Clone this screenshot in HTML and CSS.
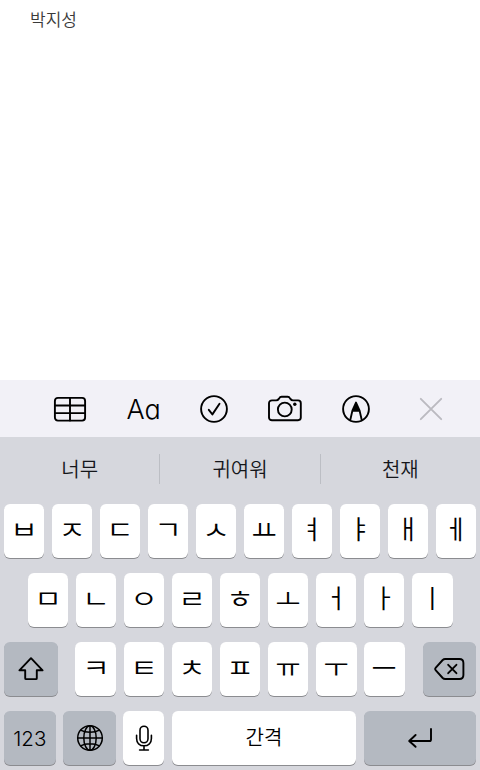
FILE: index.html
```html
<!DOCTYPE html>
<html lang="ko">
<head>
  <meta charset="UTF-8">
  <meta name="viewport" content="width=device-width, initial-scale=1.0">
  <title>메모</title>
  <link rel="stylesheet" href="styles.css">
</head>
<body>
  <div class="note">박지성</div>

  <div class="toolbar">
    <div class="tool table">
      <svg width="34" height="28" viewBox="0 0 34 28">
        <rect x="1.9" y="2.9" width="30.2" height="22.7" rx="3"/>
        <path d="M2 10.5H32M2 18.1H32M17 3V25.6"/>
      </svg>
    </div>
    <div class="tool format">Aa</div>
    <div class="tool check">
      <svg width="30" height="30" viewBox="0 0 30 30">
        <circle cx="15" cy="15" r="12.9"/>
        <path d="M9.8 15.8L13.4 20.4L20.5 9.8"/>
      </svg>
    </div>
    <div class="tool camera">
      <svg width="36" height="30" viewBox="0 0 36 30">
        <path d="M5 6.4H9.2C10.8 6.4 11.2 5.8 12 4.6C12.8 3.2 13.4 2.8 14.6 2.8H20.6C21.8 2.8 22.4 3.2 23.2 4.6C24 5.8 24.4 6.4 26 6.4H31C32.8 6.4 33.8 7.4 33.8 9.2V23.6C33.8 25.4 32.8 26.2 31 26.2H5C3.2 26.2 2 25.4 2 23.6V9.2C2 7.4 3.2 6.4 5 6.4Z"/>
        <circle cx="17.8" cy="15.5" r="6.9"/>
        <circle class="dot" cx="27.8" cy="10.3" r="1.7"/>
      </svg>
    </div>
    <div class="tool markup">
      <svg width="30" height="30" viewBox="0 0 30 30">
        <circle cx="15" cy="15" r="12.9"/>
        <path d="M9.2 26.2L11.4 16.6L15 8.6L18.6 16.6L20.8 26.2M11.4 16.8H18.6"/>
        <path class="dot" d="M15 8.2L18.7 16.8H11.3Z"/>
      </svg>
    </div>
    <div class="tool close">
      <svg width="24" height="24" viewBox="0 0 24 24">
        <path d="M1.8 1.8L22.2 22.2M22.2 1.8L1.8 22.2"/>
      </svg>
    </div>
  </div>

  <div class="keyboard">
    <div class="suggestions">
      <div class="word">너무</div>
      <div class="word">귀여워</div>
      <div class="word">천재</div>
    </div>

    <div class="row first">
      <div class="key"><span class="cons">ㅂ</span></div>
      <div class="key"><span class="cons">ㅈ</span></div>
      <div class="key"><span class="cons">ㄷ</span></div>
      <div class="key"><span class="cons">ㄱ</span></div>
      <div class="key"><span class="cons">ㅅ</span></div>
      <div class="key"><span class="flat">ㅛ</span></div>
      <div class="key"><span class="tall">ㅕ</span></div>
      <div class="key"><span class="tall">ㅑ</span></div>
      <div class="key"><span class="tall">ㅐ</span></div>
      <div class="key"><span class="tall">ㅔ</span></div>
    </div>

    <div class="row second">
      <div class="key"><span class="cons">ㅁ</span></div>
      <div class="key"><span class="cons">ㄴ</span></div>
      <div class="key"><span class="cons">ㅇ</span></div>
      <div class="key"><span class="cons">ㄹ</span></div>
      <div class="key"><span class="cons">ㅎ</span></div>
      <div class="key"><span class="flat">ㅗ</span></div>
      <div class="key"><span class="tall">ㅓ</span></div>
      <div class="key"><span class="tall">ㅏ</span></div>
      <div class="key"><span class="tall">ㅣ</span></div>
    </div>

    <div class="row third">
      <div class="key gray shift">
        <svg width="28" height="26" viewBox="0 0 28 26">
          <path d="M14 2.2L25.6 14.3H19.8V22.2C19.8 22.8 19.5 23.1 18.9 23.1H9.1C8.5 23.1 8.2 22.8 8.2 22.2V14.3H2.4Z"/>
        </svg>
      </div>
      <div class="key"><span class="cons">ㅋ</span></div>
      <div class="key"><span class="cons">ㅌ</span></div>
      <div class="key"><span class="cons">ㅊ</span></div>
      <div class="key"><span class="cons">ㅍ</span></div>
      <div class="key"><span class="flat under">ㅠ</span></div>
      <div class="key"><span class="flat under">ㅜ</span></div>
      <div class="key"><span class="flat">ㅡ</span></div>
      <div class="key gray delete">
        <svg width="32" height="24" viewBox="0 0 32 24">
          <path d="M12.2 2H26.4C29 2 30.4 3.4 30.4 6V18C30.4 20.6 29 22 26.4 22H12.2C11.2 22 10.4 21.7 9.7 21L2.6 13.2C1.8 12.3 1.8 11.7 2.6 10.8L9.7 3C10.4 2.3 11.2 2 12.2 2Z"/>
          <path d="M15.2 7.8L23.4 16.2M23.4 7.8L15.2 16.2"/>
        </svg>
      </div>
    </div>

    <div class="row fourth">
      <div class="key gray numbers">123</div>
      <div class="key gray globe">
        <svg width="28" height="28" viewBox="0 0 28 28">
          <circle cx="14" cy="14" r="12.3"/>
          <ellipse cx="14" cy="14" rx="6.2" ry="12.3"/>
          <path d="M14 1.7V26.3M1.7 14H26.3M4.6 6.2C9.5 9 18.5 9 23.4 6.2M4.6 21.8C9.5 19 18.5 19 23.4 21.8"/>
        </svg>
      </div>
      <div class="key mic">
        <svg width="20" height="28" viewBox="0 0 20 28">
          <rect x="6" y="2.2" width="8" height="16.6" rx="4"/>
          <path d="M2.6 11.2V14.4C2.6 19 5.6 21.8 10 21.8S17.4 19 17.4 14.4V11.2M10 21.8V26M5.6 26H14.4"/>
        </svg>
      </div>
      <div class="key space">간격</div>
      <div class="key gray enter">
        <svg width="26" height="22" viewBox="0 0 26 22">
          <path d="M24 2V12.4C24 13.5 23.5 14 22.4 14H2.4M8.6 8L2.2 14L8.6 19.8"/>
        </svg>
      </div>
    </div>
  </div>
</body>
</html>
```

FILE: styles.css
```css
*, *::before, *::after {
  box-sizing: border-box;
}

body {
  margin: 0;
  height: 770px;
  display: flex;
  flex-direction: column;
  overflow: hidden;
  background-color: #fff;
  color: #000;
  font-family: "Noto Sans CJK KR", sans-serif;
  font-weight: 350;
}

svg {
  display: block;
  fill: none;
  stroke: #000;
  stroke-width: 1.9;
  stroke-linecap: round;
  stroke-linejoin: round;
}

.dot {
  fill: #000;
  stroke: none;
}

.note {
  height: 380px;
  padding: 7px 0 0 30px;
  color: #3a3a3a;
  font-size: 17px;
  line-height: 24px;
}

.toolbar {
  height: 57px;
  padding: 0 12px 0 34px;
  display: flex;
  align-items: center;
  background-color: #f2f1f7;
}

.tool {
  width: 71.7px;
  display: flex;
  justify-content: center;
}

.format {
  padding: 2px 0 0 4px;
  font-family: Inter, sans-serif;
  font-size: 27px;
  font-weight: 300;
  font-feature-settings: "cv11";
  line-height: 30px;
}

.check {
  padding-left: 1px;
}

.markup {
  padding-right: 2px;
}

.close {
  margin-left: 3px;
}

.close svg {
  stroke: #bbbac0;
}

.keyboard {
  height: 333px;
  padding: 0 4px;
  background-color: #d6d7dd;
}

.suggestions {
  height: 67px;
  margin: 0 -4px;
  padding-bottom: 3px;
  display: flex;
  align-items: center;
}

.word {
  flex: 1;
  height: 30px;
  padding-bottom: 1px;
  display: flex;
  justify-content: center;
  align-items: center;
  color: #15161a;
  font-size: 20px;
}

.word + .word {
  border-left: 1px solid #bcbec4;
}

.row {
  height: 54px;
  margin-bottom: 15.1px;
  display: flex;
  gap: 7.7px;
}

.key {
  flex: 1;
  display: flex;
  justify-content: center;
  align-items: center;
  border-radius: 6px;
  background-color: #fff;
  box-shadow: 0 1px 0 #8b8c90;
  font-size: 26px;
}

.cons {
  transform: translateY(-3px) scale(1.15, 0.95);
}

.flat {
  transform: translateY(-3px) scaleX(1.05);
}

.under {
  transform: translateY(-4px) scaleX(1.05);
}

.tall {
  transform: translateY(-4px);
}

.gray {
  background-color: #b4b9c1;
}

.second {
  padding: 0 23.5px;
}

.shift,
.delete {
  flex: none;
  width: 53.5px;
}

.shift {
  margin-right: 10.2px;
}

.delete {
  margin-left: 10.2px;
}

.numbers {
  flex: none;
  width: 51.7px;
  font-family: Inter, sans-serif;
  font-size: 20.5px;
  font-weight: 300;
}

.globe {
  flex: none;
  width: 52.4px;
}

.globe svg {
  stroke-width: 1.5;
}

.mic {
  flex: none;
  width: 40.4px;
}

.mic svg {
  stroke-width: 1.6;
}

.space {
  padding-bottom: 3px;
  font-size: 20px;
}

.enter {
  flex: none;
  width: 112px;
}
```
